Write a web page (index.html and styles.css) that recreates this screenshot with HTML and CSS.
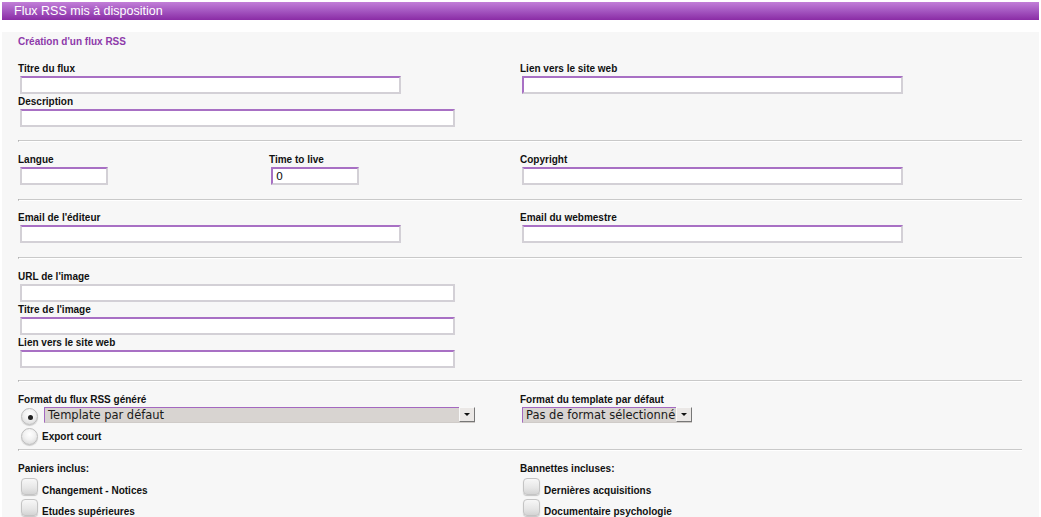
FILE: index.html
```html
<!DOCTYPE html>
<html lang="fr">
<head>
<meta charset="utf-8">
<title>Flux RSS mis à disposition</title>
<link rel="stylesheet" href="styles.css">
</head>
<body>
<div class="titlebar">Flux RSS mis à disposition</div>
<div class="panel">
  <div class="heading">Création d'un flux RSS</div>

  <div class="section first">
    <div class="grid">
      <div class="col2">
        <div class="field"><label>Titre du flux</label><input class="inp w-half" type="text"></div>
        <div class="field"><label>Description</label><input class="inp w-wide" type="text"></div>
      </div>
      <div class="col2">
        <div class="field"><label>Lien vers le site web</label><input class="inp w-half lp" type="text"></div>
      </div>
    </div>
  </div>
  <hr class="sep">

  <div class="section s2">
    <div class="grid">
      <div class="col1"><div class="field"><label>Langue</label><input class="inp w-small" type="text"></div></div>
      <div class="col1"><div class="field"><label>Time to live</label><input class="inp w-small lp" type="text" value="0"></div></div>
      <div class="col2"><div class="field"><label>Copyright</label><input class="inp w-half" type="text"></div></div>
    </div>
  </div>
  <hr class="sep">

  <div class="section s3">
    <div class="grid">
      <div class="col2"><div class="field"><label>Email de l'éditeur</label><input class="inp w-half" type="text"></div></div>
      <div class="col2"><div class="field"><label>Email du webmestre</label><input class="inp w-half" type="text"></div></div>
    </div>
  </div>
  <hr class="sep">

  <div class="section s4">
    <div class="field"><label>URL de l'image</label><input class="inp w-wide plain" type="text"></div>
    <div class="field"><label>Titre de l'image</label><input class="inp w-wide" type="text"></div>
    <div class="field"><label>Lien vers le site web</label><input class="inp w-wide" type="text"></div>
  </div>
  <hr class="sep">

  <div class="section tight">
    <div class="grid">
      <div class="col2">
        <label class="grouplabel">Format du flux RSS généré</label>
        <div class="opt-row">
          <span class="radio on"></span>
          <div class="select s-long"><span class="sel-val">Template par défaut</span><span class="sel-btn"><span class="arrow"></span></span></div>
        </div>
        <div class="opt-row second">
          <span class="radio"></span><span class="opt-label">Export court</span>
        </div>
      </div>
      <div class="col2">
        <label class="grouplabel">Format du template par défaut</label>
        <div class="opt-row">
          <div class="select s-short nomargin"><span class="sel-val">Pas de format sélectionné</span><span class="sel-btn"><span class="arrow"></span></span></div>
        </div>
      </div>
    </div>
  </div>
  <hr class="sep">

  <div class="section tight">
    <div class="grid">
      <div class="col2">
        <label class="grouplabel">Paniers inclus:</label>
        <div class="chk-row"><span class="check"></span><span class="opt-label">Changement - Notices</span></div>
        <div class="chk-row"><span class="check"></span><span class="opt-label">Etudes supérieures</span></div>
      </div>
      <div class="col2">
        <label class="grouplabel">Bannettes incluses:</label>
        <div class="chk-row"><span class="check"></span><span class="opt-label">Dernières acquisitions</span></div>
        <div class="chk-row"><span class="check"></span><span class="opt-label">Documentaire psychologie</span></div>
      </div>
    </div>
  </div>
</div>
</body>
</html>
```
FILE: styles.css
```css
html, body {
  margin: 0;
  padding: 0;
  background: #ffffff;
  font-family: "Liberation Sans", Arial, sans-serif;
  color: #1a1a1a;
  overflow: hidden;
}

.titlebar {
  margin: 2px 2px 0 2px;
  height: 18px;
  line-height: 18px;
  padding-left: 12px;
  font-size: 12.5px;
  color: #ffffff;
  background: linear-gradient(to bottom, #c27fd8 0%, #a456c0 50%, #8a2ca5 100%);
}

.panel {
  margin: 12px 2px 0 2px;
  padding: 4px 17px 0 16px;
  background: #f7f7f7;
  height: 600px;
}

.heading {
  font-size: 10px;
  line-height: 12px;
  font-weight: bold;
  color: #8e3aaa;
}

.section {
  padding: 11px 0 13px 0;
}
.section.first {
  padding-top: 14px;
}
.section.s2 {
  padding-bottom: 14px;
}
.section.s3 {
  padding-top: 10px;
  padding-bottom: 14px;
}
.section.s4 {
  padding-bottom: 12px;
}
.section.tight {
  padding-top: 11px;
  padding-bottom: 0;
}

.grid {
  display: grid;
  grid-template-columns: repeat(4, 251px);
}
.col1 { grid-column: span 1; }
.col2 { grid-column: span 2; }

label {
  display: block;
  font-size: 10px;
  line-height: 12px;
  padding-top: 1px;
  font-weight: bold;
  color: #111;
}

.field + .field {
  margin-top: 1px;
}
.field label,
.grouplabel {
  margin-bottom: 1px;
}

.inp {
  display: block;
  box-sizing: border-box;
  height: 18px;
  margin: 0 0 0 2px;
  padding: 0 3px;
  background: #ffffff;
  border: 2px solid #d3d0d6;
  border-top-color: #a870c4;
  font-family: "DejaVu Sans", sans-serif;
  font-size: 11px;
  color: #111;
  outline: none;
}
.inp.lp { border-left-color: #a870c4; }
.inp.plain { border-top-color: #d3d0d6; }
.w-half { width: 381px; }
.w-wide { width: 435px; }
.w-small { width: 88px; }

.sep {
  margin: 0;
  height: 0;
  border: 0;
  border-top: 1px solid #c9c9c9;
  border-bottom: 1px solid #ffffff;
  border-left: 1px solid #9a9a9a;
}

.opt-row {
  display: flex;
  align-items: flex-start;
  height: 21px;
}
.opt-row .radio.on {
  margin-top: 1px;
}
.opt-row.second .opt-label {
  line-height: 17px;
}

.radio {
  box-sizing: border-box;
  width: 17px;
  height: 17px;
  margin-left: 3px;
  border-radius: 50%;
  border: 1px solid #bdbdbd;
  background: radial-gradient(circle at 50% 35%, #ffffff 0%, #f1f1f1 45%, #d2d2d2 100%);
  box-shadow: 0 1px 1px rgba(0,0,0,0.18);
  position: relative;
  flex: none;
}
.radio.on::after {
  content: "";
  position: absolute;
  left: 5.5px;
  top: 5.5px;
  width: 5px;
  height: 5px;
  border-radius: 50%;
  background: #222;
}

.opt-label {
  margin-left: 4px;
  font-size: 10px;
  line-height: 12px;
  font-weight: bold;
  color: #111;
}

.select {
  box-sizing: border-box;
  display: flex;
  height: 16px;
  margin-left: 6px;
  background: #d8d4d1;
  border-top: 1px solid #a468c0;
  border-left: 1px solid #a468c0;
  border-bottom: 1px solid #cfcbc8;
  font-family: "DejaVu Sans", sans-serif;
  font-size: 11.5px;
  line-height: 14px;
  color: #1a1a1a;
}
.select.nomargin { margin-left: 2px; }
.s-long { width: 431px; }
.s-short { width: 170px; }

.sel-val {
  flex: 1;
  padding-left: 3px;
  white-space: nowrap;
  overflow: hidden;
}
.sel-btn {
  box-sizing: border-box;
  width: 16px;
  height: 15px;
  margin-top: -1px;
  background: #ebe8e6;
  border: 1px solid #f8f8f8;
  border-right-color: #777;
  border-bottom-color: #777;
  display: flex;
  align-items: center;
  justify-content: center;
  flex: none;
}
.arrow {
  width: 0;
  height: 0;
  border-left: 3px solid transparent;
  border-right: 3px solid transparent;
  border-top: 3px solid #111;
}

.chk-row {
  display: flex;
  align-items: flex-end;
  height: 21px;
}
.check {
  box-sizing: border-box;
  width: 17px;
  height: 17px;
  margin: 0 0 2px 3px;
  border-radius: 4px;
  border: 1px solid #c4c4c4;
  background: linear-gradient(to bottom, #f7f7f7 0%, #e6e6e6 60%, #d4d4d4 100%);
  box-shadow: 0 1px 1px rgba(0,0,0,0.2);
  flex: none;
}
```
